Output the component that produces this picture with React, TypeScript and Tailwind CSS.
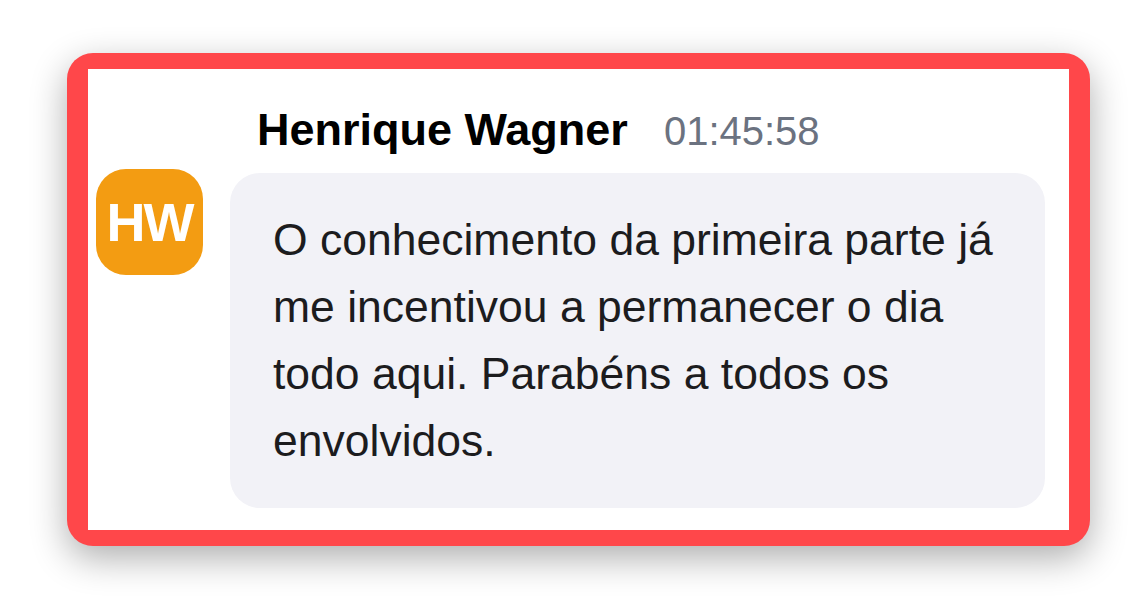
import React from 'react';

const message = {
  initials: 'HW',
  author: 'Henrique Wagner',
  time: '01:45:58',
  text: 'O conhecimento da primeira parte já me incentivou a permanecer o dia todo aqui. Parabéns a todos os envolvidos.',
};

export default function App() {
  return (
    <div className="min-h-[612px] w-[1139px] bg-white pl-[67px] pt-[53px] font-['Liberation_Sans',Arial,sans-serif]">
      {/* highlighted message card */}
      <div className="w-[1023px] rounded-[26px] bg-[#ff474a] px-[21px] py-[16px] shadow-[0_12px_36px_rgba(0,0,0,0.32)]">
        <div className="flex h-[461px] bg-white">
          <div className="ml-[8px] mt-[100px] flex h-[106px] w-[107px] shrink-0 items-center justify-center rounded-[30px] bg-[#f39c12]">
            <span className="text-[54px] font-bold leading-none tracking-[-2px] text-white">
              {message.initials}
            </span>
          </div>

          <div className="ml-[27px] flex w-[815px] flex-col pt-[34px]">
            <div className="flex items-baseline gap-[36px] pl-[27px]">
              <span className="text-[45px] font-bold leading-[54px] text-black">{message.author}</span>
              <span className="text-[40px] leading-[54px] text-[#6b7280]">{message.time}</span>
            </div>

            <div className="mt-[15px] rounded-[30px] bg-[#f2f2f7] pb-[34px] pl-[43px] pr-[30px] pt-[33px]">
              <p className="text-[44.5px] leading-[67px] text-[#1c1c1e]">{message.text}</p>
            </div>
          </div>
        </div>
      </div>
    </div>
  );
}
